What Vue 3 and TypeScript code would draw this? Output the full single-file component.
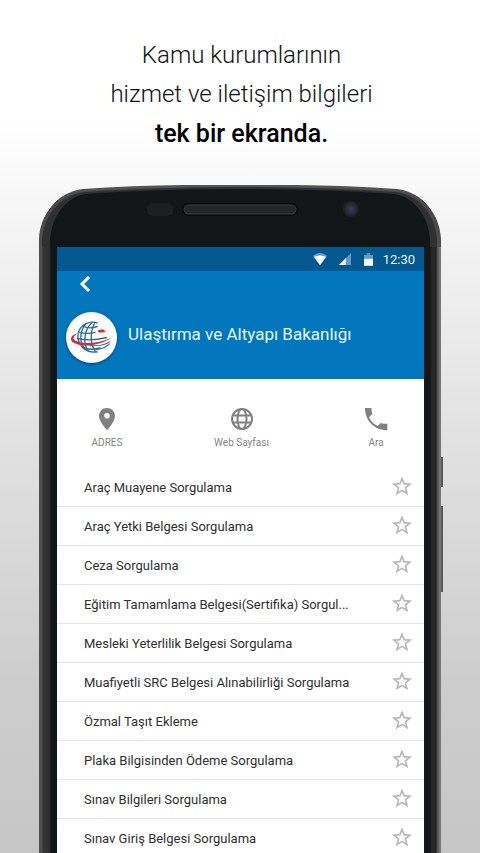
<script setup lang="ts">
import { ref } from 'vue'

interface Service {
  name: string
  favourite: boolean
}

const names: string[] = [
  'Araç Muayene Sorgulama',
  'Araç Yetki Belgesi Sorgulama',
  'Ceza Sorgulama',
  'Eğitim Tamamlama Belgesi(Sertifika) Sorgul...',
  'Mesleki Yeterlilik Belgesi Sorgulama',
  'Muafiyetli SRC Belgesi Alınabilirliği Sorgulama',
  'Özmal Taşıt Ekleme',
  'Plaka Bilgisinden Ödeme Sorgulama',
  'Sınav Bilgileri Sorgulama',
  'Sınav Giriş Belgesi Sorgulama',
]

const services = ref<Service[]>(names.map((name) => ({ name, favourite: false })))
</script>

<template>
  <main class="page">
    <h1 class="headline">
      Kamu kurumlarının<br />
      hizmet ve iletişim bilgileri<br />
      <strong>tek bir ekranda.</strong>
    </h1>

    <div class="phone">
      <svg class="phone-top" viewBox="0 0 402 62" aria-hidden="true">
        <defs>
          <linearGradient id="rim" x1="0" y1="0" x2="0" y2="1">
            <stop offset="0" stop-color="#555" />
            <stop offset="0.25" stop-color="#474747" />
            <stop offset="1" stop-color="#4e4e4e" />
          </linearGradient>
          <radialGradient id="lens">
            <stop offset="0" stop-color="#3c3e50" />
            <stop offset="0.6" stop-color="#292b36" />
            <stop offset="1" stop-color="#191c1f" />
          </radialGradient>
        </defs>
        <path d="M0 62V54C1 30 18 7 44 4Q115 -1 201 0Q287 -1 358 4C384 7 401 30 402 54V62Z" fill="url(#rim)" />
        <path d="M3 62V55C4 33 20 10 45 7Q116 2 201 2Q286 2 357 7C382 10 397 33 398 55V62Z" fill="#303030" />
        <path d="M11 62V57C11 36 24 13 46 9Q116 4 201 4Q286 4 356 9C378 13 391 36 391 57V62Z" fill="#131618" />
        <rect x="108" y="18" width="26" height="13" rx="6" fill="#1d2022" />
        <rect x="143" y="18" width="116" height="13" rx="6.500" fill="#07090a" />
        <rect x="145" y="20" width="112" height="9" rx="4.500" fill="#242628" stroke="#3b3d3e" />
        <circle cx="312" cy="24" r="8" fill="url(#lens)" />
      </svg>

      <div class="body">
        <span class="side-key power"></span>
        <span class="side-key volume"></span>

        <section class="screen">
          <div class="status">
            <svg class="wifi" viewBox="0 0 14 12" aria-hidden="true">
              <path d="M0 3Q7 -3 14 3L7 12Z" fill="#6aa1ca" />
              <path d="M1 4Q7 1 13 4L7 12Z" fill="#fff" />
            </svg>
            <svg class="signal" viewBox="0 0 12 12" aria-hidden="true">
              <path d="M12 0V12H0Z" fill="#629bc5" />
              <path d="M7 5V12H0Z" fill="#fff" />
            </svg>
            <svg class="battery" viewBox="0 0 10 14" aria-hidden="true">
              <path d="M3 0H7V2H10V6H0V2H3Z" fill="#629bc5" />
              <path d="M0 6H10V14H0Z" fill="#f4faff" />
            </svg>
            <time>12:30</time>
          </div>

          <header class="header">
            <button class="back" type="button" aria-label="Geri">
              <svg viewBox="0 0 12 18" aria-hidden="true">
                <path d="M10 2L3 9L10 16" fill="none" stroke="#fff" stroke-width="3" />
              </svg>
            </button>
            <div class="identity">
              <span class="logo">
                <svg viewBox="0 0 50 50" aria-hidden="true">
                  <g fill="none" stroke="#2b6c99" stroke-width="1.300">
                    <path d="M31 11C23 8 15 12 12 20C10 31 18 41 31 39" />
                    <path d="M26 10C18 16 16 31 22 38" />
                    <path d="M19 12C13 20 13 31 19 36" />
                    <path d="M28 11C24 19 23 31 29 39" />
                    <path d="M17 14Q23 17 31 14M13 20Q21 22 29 20M11 26Q24 29 40 25M16 35Q25 38 34 35" />
                    <path d="M23 33Q36 34 43 29M29 37Q38 36 43 31" stroke-width="1" />
                  </g>
                  <path d="M11 21C5 22 3 27 7 30C17 36 35 32 45 25C32 31 16 32 9 28C6 26 8 23 11 21Z" fill="#d92c36" />
                  <path d="M31 18L36 17L39 19L36 20L32 20Z" fill="#d92c36" />
                </svg>
              </span>
              <h2>Ulaştırma ve Altyapı Bakanlığı</h2>
            </div>
          </header>

          <nav class="actions">
            <a href="#adres">
              <svg viewBox="0 0 24 24" aria-hidden="true">
                <path d="M12 1C7.600 1 4 4.500 4 9C4 15 12 23 12 23S20 15 20 9C20 4.500 16.400 1 12 1ZM12 11.500A2.800 2.800 0 1 1 12 5.900A2.800 2.800 0 0 1 12 11.500Z" />
              </svg>
              ADRES
            </a>
            <a href="#web">
              <svg viewBox="0 0 24 24" aria-hidden="true">
                <g fill="none" stroke="#808080" stroke-width="2">
                  <circle cx="12" cy="12" r="10" />
                  <ellipse cx="12" cy="12" rx="4.500" ry="10" />
                  <path d="M3 8.500H21M3 15.500H21" />
                </g>
              </svg>
              Web Sayfası
            </a>
            <a href="#ara">
              <svg viewBox="0 0 24 24" aria-hidden="true">
                <path d="M1 1H7.500C7.500 3.200 7.800 5 8.400 7L5 10.300C6.500 13.700 9.600 17 13.500 19L16.700 15.900C18.700 16.500 20.800 16.800 23.300 16.800V23.300C10.500 23.300 1 13.700 1 1Z" />
              </svg>
              Ara
            </a>
          </nav>

          <ul class="services">
            <li v-for="service in services" :key="service.name">
              <span class="name">{{ service.name }}</span>
              <button
                class="star"
                type="button"
                :class="{ on: service.favourite }"
                :aria-label="service.name"
                :aria-pressed="service.favourite"
                @click="service.favourite = !service.favourite"
              >
                <svg viewBox="0 0 24 24" aria-hidden="true">
                  <path d="M12 3L14.500 9.200L21.500 9.800L16.200 14.200L17.900 21L12 17.300L6.100 21L7.800 14.200L2.500 9.800L9.500 9.200Z" />
                </svg>
              </button>
            </li>
          </ul>
        </section>
      </div>
    </div>
  </main>
</template>

<style>
body {
  margin: 0;
}
</style>

<style scoped>
.page {
  box-sizing: border-box;
  height: 100vh;
  overflow: hidden;
  padding-top: 36px;
  background: linear-gradient(#fff 14%, #f3f3f3 28%, #e0e0e0 53%, #cdcdcd 80%, #c6c6c6);
  font-family: Roboto, 'Liberation Sans', sans-serif;
}

.headline {
  margin: 0 0 31px;
  padding-left: 3px;
  color: #111;
  font-size: 24px;
  font-weight: 300;
  line-height: 39px;
  text-align: center;
}

.headline strong {
  color: #000;
  font-size: 25px;
  font-weight: 500;
}

.phone {
  width: 83.75%;
  margin: 0 auto;
}

.phone-top {
  display: block;
  width: 100%;
}

.body {
  position: relative;
  padding: 0 17px 0 18px;
  background:
    linear-gradient(90deg, #4e4e4e 3px, #363636 4px, #2f2f2f 10px, #121516 12px, #121516 18px, transparent 18px),
    linear-gradient(270deg, #777 1px, #4a4a4a 4px, #222 5px, #292929 9px, #131616 11px);
}

.side-key {
  position: absolute;
  left: 100%;
  width: 2px;
  background: #5b5858;
}

.power {
  top: 210px;
  height: 30px;
}

.volume {
  top: 259px;
  height: 86px;
}

.screen {
  background: #fff;
}

.status {
  display: flex;
  align-items: center;
  justify-content: flex-end;
  height: 24px;
  padding-right: 9px;
  background: #03588f;
  color: #e3f1fb;
  font-size: 13px;
}

.wifi {
  width: 14px;
  height: 12px;
  margin-right: 12px;
}

.signal {
  width: 12px;
  height: 12px;
  margin-right: 13px;
}

.battery {
  width: 9px;
  height: 13px;
  margin-right: 10px;
}

.header {
  height: 108px;
  background: #0277bd;
}

.back {
  display: block;
  padding: 4px 22px;
  border: 0;
  background: none;
}

.back svg {
  display: block;
  width: 12px;
  height: 18px;
}

.identity {
  display: flex;
  align-items: center;
  gap: 11px;
  padding: 15px 9px 0;
}

.logo {
  flex: none;
  width: 51px;
  height: 51px;
  border-radius: 50%;
  background: #fff;
  box-shadow: 0 1px 3px rgba(0, 30, 60, 0.6);
}

.logo svg {
  display: block;
}

h2 {
  margin: 0 0 8px;
  color: #e6f6ff;
  font-size: 17px;
  font-weight: 400;
  line-height: 24px;
}

.actions {
  display: flex;
  justify-content: space-between;
  padding: 28px 32px 18px 34px;
}

.actions a {
  display: flex;
  flex-direction: column;
  align-items: center;
  gap: 5px;
  min-width: 32px;
  color: #858585;
  font-size: 10px;
  line-height: 14px;
  text-decoration: none;
}

.actions svg {
  width: 24px;
  height: 24px;
  fill: #808080;
}

.services {
  margin: 0;
  padding: 0;
  list-style: none;
}

.services li {
  display: flex;
  align-items: center;
  gap: 28px;
  box-sizing: border-box;
  height: 39px;
  padding: 0 12px 0 27px;
  border-bottom: 1px solid #e6e6e6;
}

.name {
  flex: 1;
  min-width: 0;
  padding-top: 2px;
  color: #303030;
  font-size: 13px;
  line-height: 18px;
}

.star {
  flex: none;
  padding: 0 0 2px;
  border: 0;
  background: none;
}

.star svg {
  display: block;
  width: 20px;
  height: 20px;
  fill: none;
  stroke: #b8b8b8;
  stroke-width: 2;
}

.star.on svg {
  fill: #b8b8b8;
}
</style>
